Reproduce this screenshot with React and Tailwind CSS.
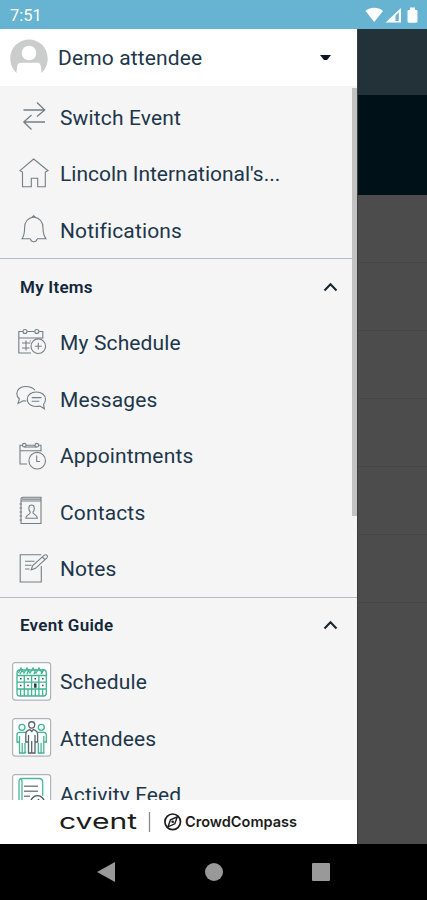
import { useState } from 'react';

const ICONS = {
  switch: <path d="M11.5 13H32.5M25 5.5L32.7 13L25 19.5M33 25H12M19.5 18L11.8 25L19.5 32.5" strokeWidth="1.3" />,
  home: <path d="M21.7 5L8 16.7L10.5 18V32.7H19.3V24.3H25.7V32.7H33.3V18L36 16.7Z" />,
  bell: (
    <>
      <path d="M21.7 7C15.5 8 12.6 12.5 12.6 18C12.6 24 12 26 10 28.8H18.5M25 28.8H34C31.8 26 31 24 31 18C31 12.5 28 8 21.7 7" />
      <path d="M19.8 7.5L21.7 5.8L23.6 7.5M18.5 29C19 32.6 24.5 32.6 25 29" />
    </>
  ),
  mySchedule: (
    <>
      <path d="M10.8 8.5H6.8V30H19M15.2 8.5H22.5M27 8.5H30.8V15.5M6.8 15H30.8" />
      <circle cx="13" cy="8.5" r="2" />
      <circle cx="24.8" cy="8.5" r="2" />
      <path d="M10 20H18.5M10 25H17.5M14 17.5V27.5M18.3 17.5V18.5" />
      <circle cx="26.3" cy="23.2" r="7.3" />
      <path d="M26.3 19.8V26.6M22.9 23.2H29.7" />
    </>
  ),
  messages: (
    <>
      <path d="M23 11.3C21 8.5 17.5 7.5 13.5 7.5C8.5 7.5 4.8 10.5 4.8 14.6C4.8 17 6 18.8 7.4 20L6 24.5L11.2 21.7L14.3 22" />
      <path d="M24.3 13C29.5 13 33.5 16 33.5 20.2C33.5 22.5 32.7 24.2 31.5 25.3L32.4 29.8L28 27C21 28.8 15.3 25.3 15.3 20.2C15.3 16 19.2 13 24.3 13Z" />
      <path d="M19.7 18.6H29.5M19.7 22.2H27.3" />
    </>
  ),
  appointments: (
    <>
      <path d="M10.5 9.2H8V28H15M14 9.2H23M26.8 9.2H29V15.5M8 14.7H29" />
      <circle cx="12.3" cy="9.2" r="1.8" />
      <circle cx="24.8" cy="9.2" r="1.8" />
      <path d="M12.3 11H24.8" />
      <circle cx="25.2" cy="24.7" r="8.3" />
      <path d="M24.7 19.5V25.5H28" />
    </>
  ),
  contacts: (
    <>
      <path d="M29 9V31.5H9V7.3C9 5.8 9.8 5.2 11 5.2H29V9H9M10 7.1H29" />
      <path d="M7.5 12H10M7.5 16H10M7.5 20H10M7.5 24H10M7.5 28H10" />
      <path d="M19.5 13C15.8 13 16.6 18.5 18.3 20.2C18.3 22.8 14 22.5 13.8 26.2H25.4C25.2 22.5 20.9 22.8 20.9 20.2C22.6 18.5 23.3 13 19.5 13Z" />
    </>
  ),
  notes: (
    <>
      <path d="M29.3 5.7H8.2V33H29.3V17M13 12.3H22.5M13 16.3H19.5M13 20H17.5" />
      <path d="M19.2 20.8L20.7 16.5L32.3 6.2C34.3 4.8 36.6 7 34.9 8.9L23.5 19.3ZM30.3 8L33 10.7" />
    </>
  ),
};

const TILES = {
  schedule: (
    <g stroke="#43b592" strokeWidth="1.3">
      <path d="M5 11C5 9 6 8 8 8H32C33.5 8 34.3 9 34.3 11V31C34.3 33 33.3 34 31.5 34H8C6 34 5 33 5 31Z" />
      <path d="M5 13.5H34.3M5 20.2H34.3M5 27H34.3M12.3 13.5V34M19.6 13.5V34M26.9 13.5V34M8.6 27V34M16 27V34M23.3 27V34M30.6 27V34" />
      <path d="M6.5 11L9 6L12 11L15 6L18 11L21 6L24 11L27 6L30 11L32 7M8 12L11 7M15 12L17 7M22 12L24 7M29 12L31 7" />
      <path d="M8 16.8H9.5M15.3 16.8H16.8M22.5 16.8H24M30 16.8H31.5M8 23.5H9.5M15.3 23.5H16.8M30 23.5H31.5" stroke="#26584c" strokeWidth="1.6" />
      <path d="M23.3 21.5V25.7" stroke="#1b3a35" strokeWidth="2.5" />
    </g>
  ),
  attendees: (
    <g strokeWidth="1.3">
      <g stroke="#43b592">
        <circle cx="10" cy="9.3" r="3" />
        <circle cx="29.3" cy="9.3" r="3" />
        <path d="M14 14.3H7.5C5.8 14.3 5 15.5 5 17V24H7.5V35H13V25M10.2 25V35M7.5 18V25M13.5 33.5V35" />
        <path d="M25.3 14.3H31.8C33.5 14.3 34.3 15.5 34.3 17V24H31.8V35H26.3V25M29.1 25V35M31.8 18V25" />
      </g>
      <g stroke="#56646b">
        <path d="M16.7 6.5C16.7 2.8 22.7 2.8 22.7 6.5C22.7 11.2 16.7 11.2 16.7 6.5Z" />
        <path d="M18 11.5L16 12.3C14.3 13 13.8 14 13.8 16V24H16.5V35H23V24H25.6V16C25.6 14 25 13 23.3 12.3L21.3 11.5L19.7 13.5ZM19.7 23V35M16.5 17V24M23 17V24" />
      </g>
    </g>
  ),
  activity: (
    <g strokeWidth="1.3">
      <path d="M10 37V29H7V7.5C7 5.5 8 4.5 10 4.5H27C29.5 4.5 30.7 5.5 30.7 7.8V22M10 29V8C10 6 9.5 4.5 8 5" stroke="#4cb99a" />
      <path d="M12 12.3H26M12 17.3H26M12 22.3H18" stroke="#7b858a" strokeWidth="1.5" />
      <circle cx="25.5" cy="28.5" r="6.8" stroke="#4a5960" />
      <path d="M23 30L27 25" stroke="#4a5960" />
    </g>
  ),
};

const SECTIONS = [
  {
    items: [
      { icon: 'switch', label: 'Switch Event' },
      { icon: 'home', label: "Lincoln International's...", spacing: 'tracking-[-0.02px]' },
      { icon: 'bell', label: 'Notifications' },
    ],
  },
  {
    title: 'My Items',
    items: [
      { icon: 'mySchedule', label: 'My Schedule' },
      { icon: 'messages', label: 'Messages' },
      { icon: 'appointments', label: 'Appointments' },
      { icon: 'contacts', label: 'Contacts' },
      { icon: 'notes', label: 'Notes' },
    ],
  },
  {
    title: 'Event Guide',
    items: [
      { tile: 'schedule', label: 'Schedule' },
      { tile: 'attendees', label: 'Attendees' },
      { tile: 'activity', label: 'Activity Feed' },
    ],
  },
];

function StatusBar() {
  return (
    <div className="flex h-[29px] shrink-0 items-center justify-between bg-[#66b3d2] pl-[10px] pr-2 text-white">
      <span className="pt-[3px] text-[16.5px] leading-none">7:51</span>
      <svg width="54" height="18" viewBox="0 0 54 18" fill="white">
        <path d="M.5 5C5.5.7 13 .7 18 5L9.2 16Z" />
        <path d="M20.5 16.5L36 2V16.5ZM30.5 9.5V15H33.8V6.3Z" fillRule="evenodd" />
        <path d="M42.5 4H45V1.5H50V4H51.3C52 4 52.5 4.5 52.5 5.2V15.5C52.5 16.2 52 16.7 51.3 16.7H43.7C43 16.7 42.5 16.2 42.5 15.5V5.2C42.5 4.5 43 4 43.7 4Z" />
      </svg>
    </div>
  );
}

function MenuItem({ item }) {
  return (
    <li className="flex h-[56.45px] items-center pl-3">
      {item.tile ? (
        <svg width="40" height="39" viewBox="0 0 40 39" fill="none" className="mr-2 -mt-px shrink-0">
          <rect x=".6" y=".6" width="38" height="37.5" rx="2.5" fill="#fdfefe" stroke="#aeb4b6" strokeWidth="1.2" />
          {TILES[item.tile]}
        </svg>
      ) : (
        <svg width="40" height="40" viewBox="0 0 40 40" fill="none" stroke="#737f85" strokeWidth="1.1" className="mr-2 shrink-0">
          {ICONS[item.icon]}
        </svg>
      )}
      <span className={`whitespace-nowrap pt-[2px] text-[21px] leading-none text-[#20364a] ${item.spacing || 'tracking-[0.14px]'}`}>{item.label}</span>
    </li>
  );
}

function Section({ section }) {
  const [open, setOpen] = useState(true);

  return (
    <section>
      {section.title && (
        <button onClick={() => setOpen(!open)} className="flex h-[56.45px] w-full items-center justify-between border-t-[1.5px] border-[#b3bfc0] pl-5 pr-[19px]">
          <span className="text-[17px] font-semibold leading-none tracking-[0.25px] text-[#12263a]">{section.title}</span>
          <svg width="15" height="10" viewBox="0 0 15 10" fill="none" stroke="#17252f" strokeWidth="2" className="-mt-px">
            <path d="M1.5 8.5L7.5 2.2L13.5 8.5" />
          </svg>
        </button>
      )}
      {open && <ul>{section.items.map((item) => <MenuItem key={item.label} item={item} />)}</ul>}
    </section>
  );
}

function Footer() {
  return (
    <div className="flex h-11 shrink-0 items-center bg-white pl-[60px]">
      <svg width="238" height="28" viewBox="0 0 238 28" fill="#1c1c1c">
        <text x="-1" y="21.3" fontFamily="Inter, sans-serif" fontSize="22" textLength="78" lengthAdjust="spacingAndGlyphs">cvent</text>
        <path d="M89.5 4V24" stroke="#8b8b8b" strokeWidth="1.3" />
        <circle cx="112.7" cy="13.8" r="7.8" fill="none" stroke="#1c1c1c" strokeWidth="1.7" />
        <path d="M117.3 8.8L114.8 15.8L108 18.8L110.5 11.8Z" fill="none" stroke="#1c1c1c" strokeWidth="1.4" />
        <circle cx="112.7" cy="13.8" r="1.3" />
        <text x="125" y="19" fontFamily="Inter, sans-serif" fontSize="14.5" fontWeight="600" textLength="112" lengthAdjust="spacingAndGlyphs">CrowdCompass</text>
      </svg>
    </div>
  );
}

function Drawer() {
  return (
    <aside className="flex w-[357px] shrink-0 flex-col bg-[#f5f5f5]">
      <div className="flex h-[57px] shrink-0 items-center bg-white pl-[10px] pr-[26px]">
        <svg width="38" height="38" viewBox="0 0 38 38" className="mr-[10px]">
          <path d="M6.5 34C-2 26.5-1.5 12 6.5 5.3C14-1.3 24.5-1 31.5 5.3C39.5 12.5 40 26.5 31.5 34C31 26 30.5 23.7 27.5 23.7H11C7.5 23.7 6.8 26.5 6.5 34Z" fill="#cbcccc" />
          <circle cx="19" cy="14" r="7.3" fill="white" />
        </svg>
        <span className="pt-[2px] text-[21px] leading-none tracking-[0.14px] text-[#20364a]">Demo attendee</span>
        <svg width="11" height="6" viewBox="0 0 11 6" className="ml-auto">
          <path d="M0 0H11L7 5H4Z" fill="#0c1626" />
        </svg>
      </div>
      <div className="relative min-h-0 flex-1 overflow-hidden pt-[3px]">
        <div className="absolute right-0 top-[2px] h-[428px] w-[5px] bg-[#c2c2c2]" />
        {SECTIONS.map((section, i) => <Section key={i} section={section} />)}
      </div>
      <Footer />
    </aside>
  );
}

// Event page sitting under the dimmed overlay
function Backdrop() {
  return (
    <div className="flex flex-1 flex-col border-l border-[#3d3d3d] bg-[#4c4c4c]">
      <div className="h-[66px] bg-[#223238]" />
      <div className="h-[100px] bg-[#001118]" />
      {[0, 1, 2, 3, 4, 5].map((row) => <div key={row} className="h-[68px] border-b border-[#464646]" />)}
    </div>
  );
}

function NavBar() {
  return (
    <div className="flex h-14 shrink-0 items-center justify-between bg-black pl-[97px] pr-[97px]">
      <svg width="18" height="20" viewBox="0 0 18 20"><path d="M0 10L18 0V20Z" fill="#999999" /></svg>
      <div className="size-[18px] rounded-full bg-[#999999]" />
      <div className="size-[18px] rounded-[1px] bg-[#999999]" />
    </div>
  );
}

export default function App() {
  return (
    <div className="flex h-[900px] w-[427px] flex-col overflow-hidden bg-black font-[Roboto,sans-serif]">
      <StatusBar />
      <div className="flex min-h-0 flex-1">
        <Drawer />
        <Backdrop />
      </div>
      <NavBar />
    </div>
  );
}
